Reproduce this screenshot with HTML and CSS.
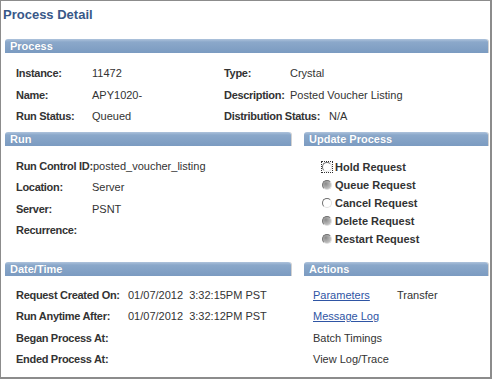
FILE: index.html
```html
<!DOCTYPE html>
<html lang="en">
<head>
    <meta charset="UTF-8">
    <meta name="viewport" content="width=device-width, initial-scale=1.0">
    <title>Process Detail</title>
    <link rel="stylesheet" href="styles.css">
</head>
<body>
<div class="page">

    <!-- Title -->
    <h1 class="title">Process Detail</h1>

    <!-- Process Section -->
    <div class="panel">
        <div class="bar">Process</div>
        <div class="fields">
            <div class="row">
                <span class="label w76">Instance:</span>
                <span class="value w132">11472</span>
                <span class="label w66">Type:</span>
                <span class="value">Crystal</span>
            </div>
            <div class="row">
                <span class="label w76">Name:</span>
                <span class="value w132">APY1020-</span>
                <span class="label w66">Description:</span>
                <span class="value">Posted Voucher Listing</span>
            </div>
            <div class="row">
                <span class="label w76">Run Status:</span>
                <span class="value w132">Queued</span>
                <span class="label w105">Distribution Status:</span>
                <span class="value">N/A</span>
            </div>
        </div>
    </div>

    <!-- Run / Update Process -->
    <div class="split">
        <div class="panel left">
            <div class="bar">Run</div>
            <div class="fields">
                <div class="row">
                    <span class="label w77">Run Control ID:</span>
                    <span class="value">posted_voucher_listing</span>
                </div>
                <div class="row">
                    <span class="label w76">Location:</span>
                    <span class="value">Server</span>
                </div>
                <div class="row">
                    <span class="label w76">Server:</span>
                    <span class="value">PSNT</span>
                </div>
                <div class="row">
                    <span class="label w76">Recurrence:</span>
                    <span class="value"></span>
                </div>
            </div>
        </div>
        <div class="panel right">
            <div class="bar">Update Process</div>
            <div class="radios">
                <div class="radio-row"><span class="focus-box"><span class="radio off"></span></span>Hold Request</div>
                <div class="radio-row"><span class="radio dis"></span>Queue Request</div>
                <div class="radio-row"><span class="radio off"></span>Cancel Request</div>
                <div class="radio-row"><span class="radio dis"></span>Delete Request</div>
                <div class="radio-row"><span class="radio dis"></span>Restart Request</div>
            </div>
        </div>
    </div>

    <!-- Date/Time / Actions -->
    <div class="split">
        <div class="panel left">
            <div class="bar">Date/Time</div>
            <div class="fields tight">
                <div class="row">
                    <span class="label w112">Request Created On:</span>
                    <span class="value">01/07/2012&nbsp; 3:32:15PM PST</span>
                </div>
                <div class="row">
                    <span class="label w112">Run Anytime After:</span>
                    <span class="value">01/07/2012&nbsp; 3:32:12PM PST</span>
                </div>
                <div class="row">
                    <span class="label w112">Began Process At:</span>
                    <span class="value"></span>
                </div>
                <div class="row">
                    <span class="label w112">Ended Process At:</span>
                    <span class="value"></span>
                </div>
            </div>
        </div>
        <div class="panel right">
            <div class="bar">Actions</div>
            <div class="actions">
                <div class="row">
                    <a class="link w84" href="#">Parameters</a>
                    <span class="value">Transfer</span>
                </div>
                <div class="row">
                    <a class="link" href="#">Message Log</a>
                </div>
                <div class="row">
                    <span class="value">Batch Timings</span>
                </div>
                <div class="row">
                    <span class="value">View Log/Trace</span>
                </div>
            </div>
        </div>
    </div>

</div>
</body>
</html>
```

FILE: styles.css
```css
body {
    margin: 0;
    font-family: "Liberation Sans", Arial, sans-serif;
    font-size: 11px;
    color: #333;
    background: #fff;
}
.page {
    box-sizing: border-box;
    width: 492px;
    height: 379px;
    border: 1px solid #8c8c8c;
    border-right: 2px solid #8c8c8c;
    border-bottom: 2px solid #8c8c8c;
    overflow: hidden;
}
.title {
    margin: 0 0 15px 0;
    padding: 5px 0 0 2px;
    height: 18px;
    line-height: 18px;
    font-size: 13px;
    font-weight: bold;
    color: #385888;
}
.panel {
    margin: 0 2px 0 4px;
}
.bar {
    height: 14px;
    line-height: 14px;
    padding-left: 5px;
    font-weight: bold;
    color: #fff;
    background: linear-gradient(#aec3dc 0, #8ba8ca 3px, #7b9bc1 100%);
    border-radius: 3px 3px 0 0;
    box-shadow: 1px 0 0 #d2d2d2;
    text-shadow: 0 0 1px #6d8bb0;
}
.fields {
    padding: 10px 0 4px 11px;
}
.fields.tight {
    padding-top: 9px;
}
.row {
    display: flex;
    height: 21.5px;
    line-height: 21.5px;
    white-space: nowrap;
}
.label {
    font-weight: bold;
    letter-spacing: -0.3px;
}
.w66 { width: 66px; }
.w76 { width: 76px; }
.w77 { width: 77px; }
.w84 { width: 84px; }
.w105 { width: 105px; }
.w112 { width: 112px; }
.w132 { width: 132px; }

.split {
    display: flex;
    gap: 13px;
    margin: 0 2px 0 4px;
}
.split .panel {
    margin: 0;
}
.split + .split {
    margin-top: 14px;
}
.left {
    width: 286px;
}
.right {
    flex: 1;
}
.radios {
    padding: 12px 0 0 18px;
}
.radio-row {
    display: flex;
    align-items: center;
    height: 18px;
    font-weight: bold;
}
.radio {
    box-sizing: border-box;
    width: 10px;
    height: 10px;
    margin-right: 3px;
    border-radius: 50%;
    border: 1px solid;
    border-color: #6e6e6e #e0e0e0 #e0e0e0 #6e6e6e;
}
.radio.off {
    background: #fff;
}
.radio.dis {
    background: radial-gradient(circle at 35% 35%, #8a8a8a 0, #b8b8b8 60%, #d6d6d6 100%);
}
.focus-box {
    display: flex;
    margin: -1px 2px -1px -1px;
    border: 1px dotted #333;
}
.focus-box .radio {
    margin-right: 0;
}
.actions {
    padding: 9px 0 0 9px;
}
.link {
    color: #2f55a4;
    text-decoration: underline;
}
```
